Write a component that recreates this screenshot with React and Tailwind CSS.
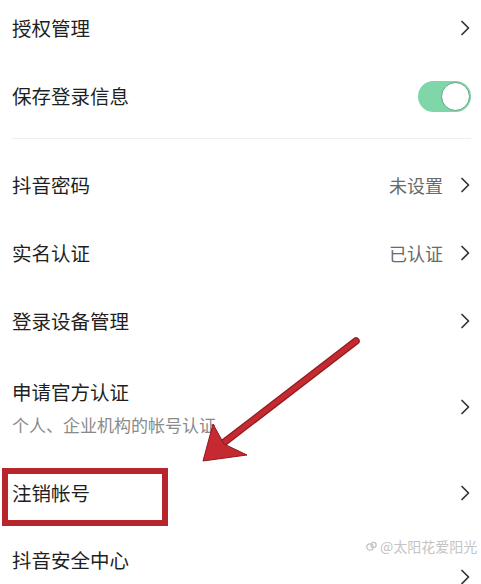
import React from "react";

const font = { fontFamily: '"Noto Sans CJK SC", "Noto Sans", sans-serif' };

const Chevron = () => (
  <svg width="10" height="16" viewBox="0 0 10 16" className="shrink-0">
    <path d="M2 1.5 L8.5 8 L2 14.5" fill="none" stroke="#333" strokeWidth="1.7" strokeLinecap="round" strokeLinejoin="round" />
  </svg>
);

const Toggle = () => (
  <div className="relative w-[53px] h-[31px] rounded-full bg-[#7ed6a9] -mr-[1px]">
    <div className="absolute right-[1px] top-[1px] w-[29px] h-[29px] rounded-full bg-white border border-[#5f9f82]" />
  </div>
);

// one settings line
const Row = ({ title, value, sub, toggle, height, extra }) => (
  <div className={`relative flex items-center justify-between pl-[12px] pr-[11px] ${height} ${extra || ""}`}>
    <div className="flex flex-col">
      <span className="text-[19.5px] leading-[28px] text-[#1f1f1f]">{title}</span>
      {sub && <span className="mt-[7px] text-[17px] leading-[24px] text-[#8a8a8a]">{sub}</span>}
    </div>
    {toggle ? (
      <Toggle />
    ) : (
      <div className="flex items-center">
        {value && <span className="mr-[17px] text-[18px] text-[#6a6a6a]">{value}</span>}
        <Chevron />
      </div>
    )}
  </div>
);

export default function App() {
  return (
    <div className="relative w-[481px] h-[584px] overflow-hidden bg-white" style={font}>
      <Row title="授权管理" height="h-[62px]" extra="pb-[6px]" />
      <Row title="保存登录信息" height="h-[68px]" toggle />
      <div className="mt-[8px] ml-[12px] mr-[10px] h-px bg-[#eeeeee]" />
      <div className="mt-[12px]">
        <Row title="抖音密码" value="未设置" height="h-[68px]" />
        <Row title="实名认证" value="已认证" height="h-[68px]" />
        <Row title="登录设备管理" height="h-[68px]" />
        <Row title="申请官方认证" sub="个人、企业机构的帐号认证" height="h-[104px]" />
        <div className="relative">
          <Row title="注销帐号" height="h-[68px]" />
          <div className="absolute left-[2px] top-[9px] w-[166px] h-[58px] border-[6px] border-[#b8262c]" />
        </div>
        {/* last row runs past the bottom edge, its chevron sits lower than the title */}
        <div className="flex justify-between pl-[12px] pr-[11px] pt-[19px]">
          <span className="text-[19.5px] leading-[28px] text-[#1f1f1f]">抖音安全中心</span>
          <div className="mt-[23px]">
            <Chevron />
          </div>
        </div>
      </div>

      {/* red arrow drawn on top of the screenshot */}
      <svg className="absolute left-0 top-0" width="481" height="584" viewBox="0 0 481 584">
        <line x1="356" y1="341" x2="222" y2="444" stroke="#8f1c20" strokeWidth="7.5" strokeLinecap="round" />
        <line x1="356" y1="341" x2="222" y2="444" stroke="#c42a30" strokeWidth="5" strokeLinecap="round" />
        <path d="M203 461 L213 424 L224 444 L247 455 Z" fill="#c42a30" stroke="#8f1c20" strokeWidth="1" strokeLinejoin="round" />
      </svg>

      {/* watermark */}
      <div className="absolute left-[366px] top-[537px] flex items-center text-[14px] leading-[18px] text-[#c4c4c4]">
        <svg width="11" height="11" viewBox="0 0 11 11" className="mr-[3px]">
          <circle cx="4" cy="6" r="3.2" fill="none" stroke="#c4c4c4" strokeWidth="1.3" />
          <circle cx="7.5" cy="4" r="2.6" fill="none" stroke="#c4c4c4" strokeWidth="1.3" />
        </svg>
        <span>@太阳花爱阳光</span>
      </div>
    </div>
  );
}
